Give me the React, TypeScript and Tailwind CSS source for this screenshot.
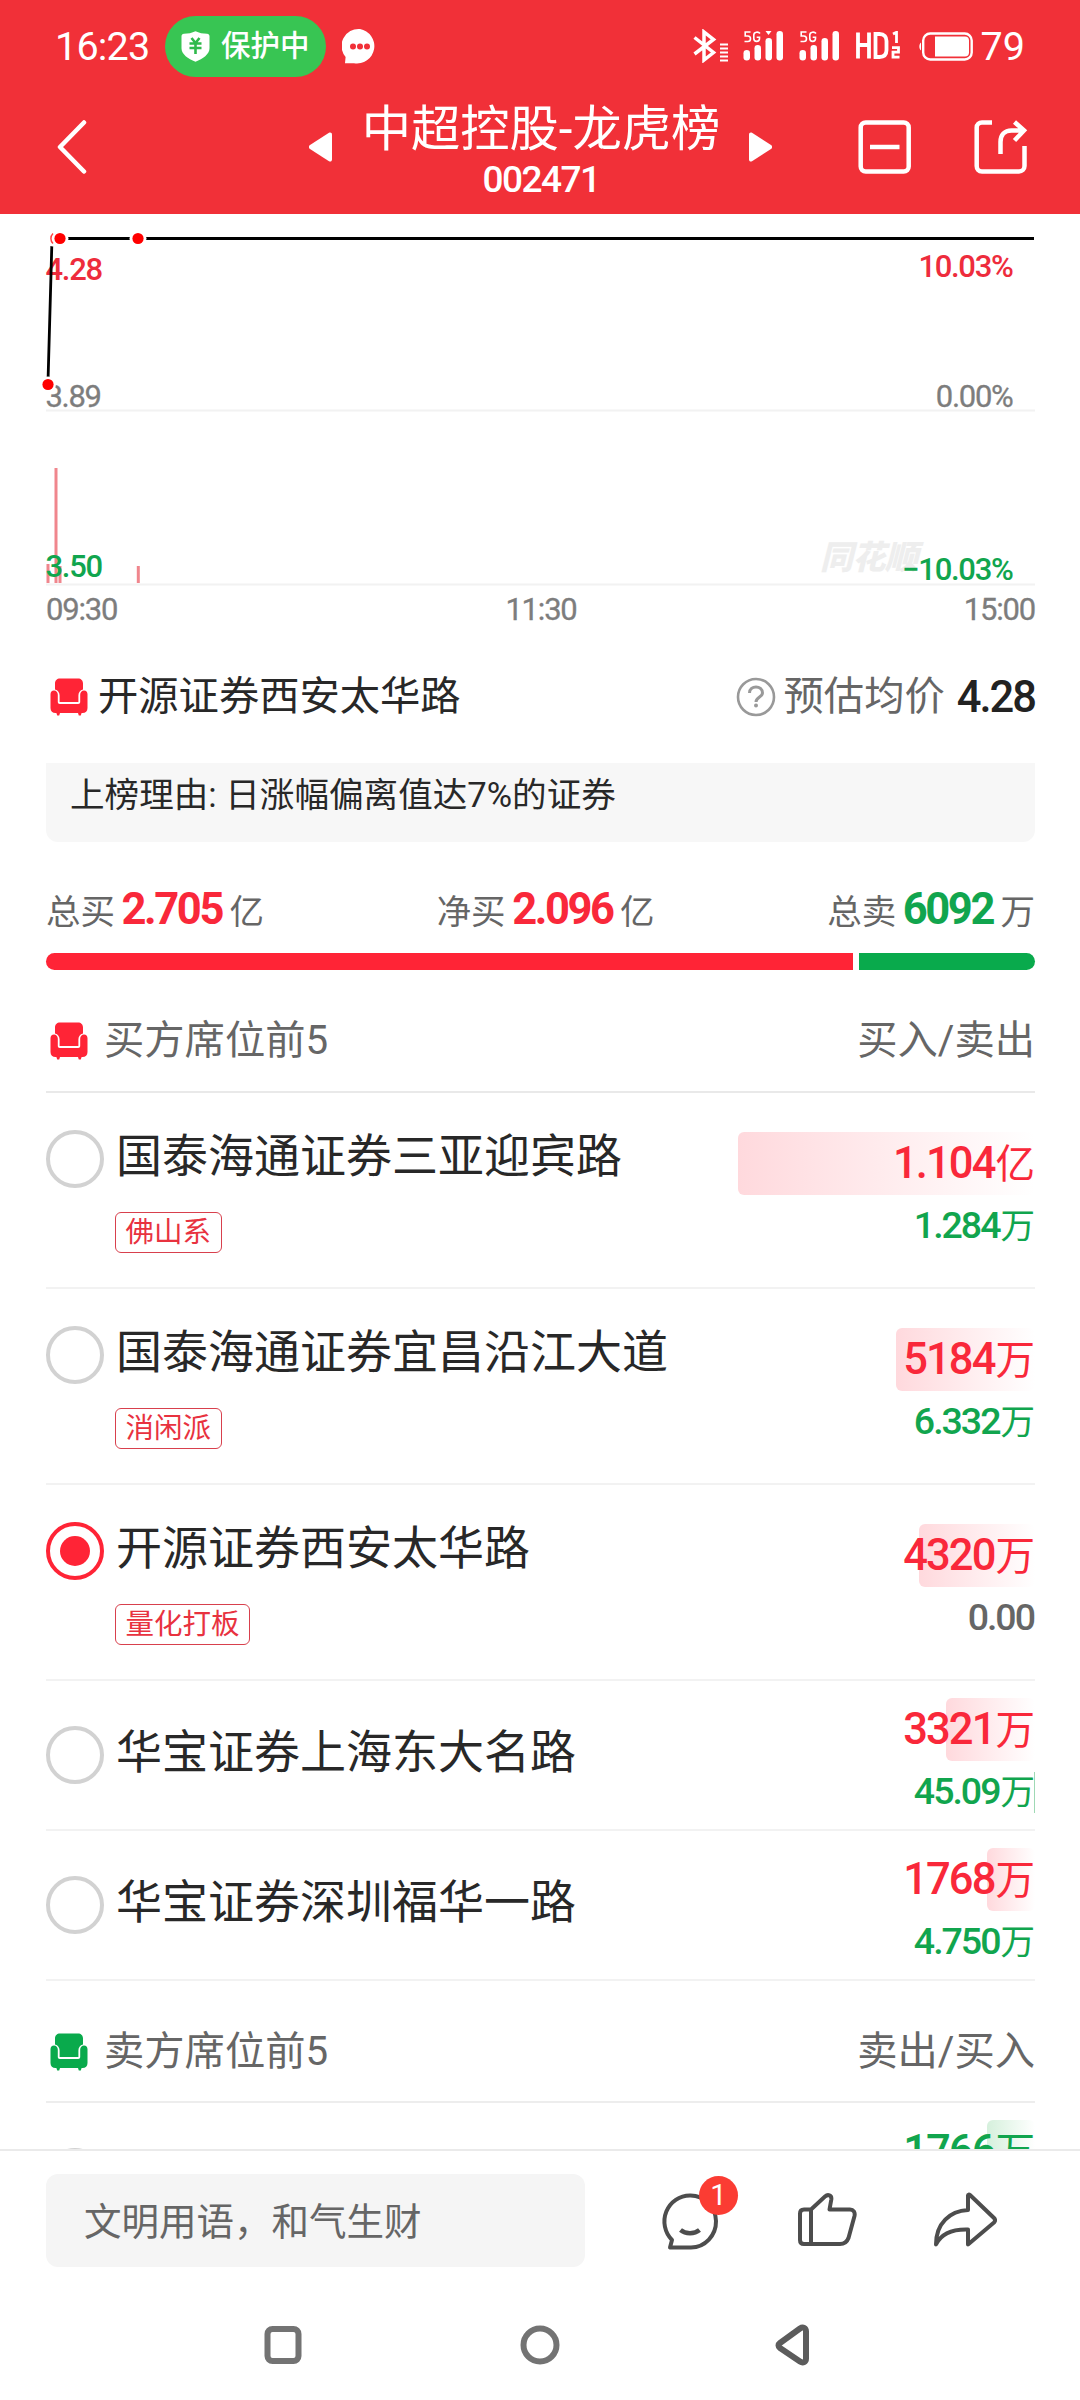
import React from "react";

type Seat = {
  name: string;
  tag?: string;
  selected?: boolean;
  main: string;
  unit: string;
  sub: string;
  subUnit: string;
  barWidth: number;
  tick?: boolean;
};

const buyers: Seat[] = [
  { name: "国泰海通证券三亚迎宾路", tag: "佛山系", main: "1.104", unit: "亿", sub: "1.284", subUnit: "万", barWidth: 297 },
  { name: "国泰海通证券宜昌沿江大道", tag: "消闲派", main: "5184", unit: "万", sub: "6.332", subUnit: "万", barWidth: 139 },
  { name: "开源证券西安太华路", tag: "量化打板", selected: true, main: "4320", unit: "万", sub: "0.00", subUnit: "", barWidth: 116 },
  { name: "华宝证券上海东大名路", main: "3321", unit: "万", sub: "45.09", subUnit: "万", barWidth: 89, tick: true },
  { name: "华宝证券深圳福华一路", main: "1768", unit: "万", sub: "4.750", subUnit: "万", barWidth: 48 },
];

function Sofa({ className }: { className: string }) {
  return (
    <svg width="38" height="38" viewBox="0 0 38 38" className={className} fill="currentColor">
      <path d="M10 0.5h18c3 0 5 2 5 5v6c-3 .7-4.600 3-4.600 6v6.500H9.600v-6.500c0-3-1.600-5.300-4.600-6v-6c0-3 2-5 5-5z" />
      <path d="M4 12.500c2.200 0 3.800 1.700 3.800 4v7.500c0 1.300.8 2 2 2h18.400c1.200 0 2-.7 2-2v-7.500c0-2.300 1.600-4 3.800-4s3.500 1.600 3.500 3.700V30c0 3.200-2 5-5 5h-.9l-.8 2.500h-2L28 35H10l-.8 2.500h-2L6.400 35h-.9c-3 0-5-1.800-5-5V16.200c0-2.100 1.300-3.700 3.500-3.700z" />
    </svg>
  );
}

function Signal({ mark }: { mark?: boolean }) {
  return (
    <svg width="41" height="30" viewBox="0 0 41 30" fill="#fff">
      <rect x="0.500" y="19" width="6.500" height="10.500" rx="3.200" />
      <rect x="11.500" y="14" width="6.500" height="15.500" rx="3.200" />
      <rect x="22.500" y="7" width="6.500" height="22.500" rx="3.200" />
      <rect x="33.500" y="0" width="6.500" height="29.500" rx="3.200" />
      {mark && <path d="M22.500 0h6l-3 4z" />}
      <path d="M7.500 1H2.200v4h2.600c3.600 0 3.600 5.500 0 5.500H1.500M17 2.500C15.500 0.500 10.800 0.500 10.800 4v3.500c0 3.800 5.700 3.800 5.700 0V6.300h-2.800" fill="none" stroke="#fff" strokeWidth="1.600" />
    </svg>
  );
}

function StatusBar() {
  return (
    <div className="flex h-[92px] items-center pl-[55px] pr-[55px] text-white">
      <span className="w-[110px] pt-[2px] text-[39.5px] leading-[40px] tracking-[-0.8px]">16:23</span>
      <div className="flex h-[61px] w-[161px] items-center rounded-full bg-[#38c553] pl-[16px]">
        <svg width="29" height="31" viewBox="0 0 29 31">
          <path d="M14.500 0.300C18 2 22 2.800 26 2.800c1.500 0 2.500 1 2.500 2.500v12c0 6-6.500 10.500-14 13.500C7 27.800.5 23.300.5 17.300v-12c0-1.500 1-2.500 2.500-2.500 4 0 8-.8 11.500-2.500z" fill="#fff" />
          <path d="M10.500 7l4 5 4-5M8.500 12.500h12M8.500 17h12M14.500 12v11" stroke="#2fb94b" strokeWidth="2.600" fill="none" />
        </svg>
        <span className="ml-[11px] text-[29.5px] font-medium leading-[40px]">保护中</span>
      </div>
      <svg width="36" height="37" viewBox="0 0 36 37" className="ml-[16px] mt-[1px]">
        <path d="M18 1a17 17 0 1 1-6 34.200H3l.6-6.200A17 17 0 0 1 18 1z" fill="#fff" />
        <g fill="#f13038"><circle cx="11" cy="18.500" r="3" /><circle cx="18" cy="18.500" r="3" /><circle cx="25" cy="18.500" r="3" /></g>
      </svg>
      <div className="ml-auto flex h-[32px] items-center">
        <svg width="35" height="34" viewBox="0 0 35 34" fill="none" stroke="#fff" strokeWidth="3.500">
          <path d="M1.500 8.500L20.500 23.500 11 31V3l9.500 7.500L1.500 25" />
          <path d="M27 15.500h8M27 19.500h8M27 23.500h8M27 27.500h8M27 31.500h8" strokeWidth="1.800" />
        </svg>
        <span className="ml-[15px]"><Signal mark /></span>
        <span className="ml-[15px]"><Signal /></span>
        <svg width="45" height="30" viewBox="0 0 45 30" fill="none" stroke="#fff" className="ml-[16px]">
          <path d="M2 1.500v26M13 1.500v26M2 14h11M19.500 3v23h4c5 0 7-3 7-7v-9c0-4-2-7-7-7z" strokeWidth="3.800" />
          <path d="M37 3l3.500-1.700V12M36 16.700h6.500v4.500h-5.500v5h6.500" strokeWidth="2.800" />
        </svg>
        <svg width="56" height="29" viewBox="0 0 56 29" className="ml-[17px]">
          <path d="M3 10.500C.8 12 .8 17 3 18.500z" fill="#fff" />
          <rect x="5.200" y="1.500" width="48.500" height="26" rx="7" fill="none" stroke="#fff" strokeWidth="2.400" />
          <path d="M17 4.500h30c2.500 0 4 1.500 4 4v12c0 2.500-1.500 4-4 4H17z" fill="#fff" />
        </svg>
        <span className="ml-[7px] pt-[1px] text-[39.5px] leading-[40px]">79</span>
      </div>
    </div>
  );
}

function TitleBar() {
  return (
    <div className="flex h-[122px] items-start text-white">
      <svg width="31" height="54" viewBox="0 0 31 54" className="ml-[57px] mt-[28px]" fill="none" stroke="#fff" strokeWidth="4.500" strokeLinecap="round" strokeLinejoin="round">
        <path d="M27 2.500L3 27l24 24.500" />
      </svg>
      <svg width="24" height="30" viewBox="0 0 24 30" className="ml-[221px] mt-[40px]" fill="#fff">
        <path d="M1 13L20 .8c1.500-.9 3 0 3 1.700v25c0 1.700-1.500 2.600-3 1.700L1 17c-1.500-1-1.500-3 0-4z" />
      </svg>
      <div className="flex w-[416px] flex-col items-center">
        <div className="mt-[7px] text-[49.3px] leading-[60px]">中超控股-龙虎榜</div>
        <div className="mt-px text-[37px] font-medium leading-[40px] tracking-[-1.500px]">002471</div>
      </div>
      <svg width="24" height="30" viewBox="0 0 24 30" className="-ml-[1px] mt-[40px]" fill="#fff">
        <path d="M23 13L4 .8C2.500-.1 1 .8 1 2.500v25c0 1.700 1.500 2.600 3 1.700L23 17c1.500-1 1.500-3 0-4z" />
      </svg>
      <svg width="54" height="54" viewBox="0 0 54 54" className="ml-[86px] mt-[28px]" fill="none" stroke="#fff" strokeWidth="4.500">
        <rect x="2.700" y="2.500" width="48" height="49" rx="5" /><path d="M12 27h29.500" />
      </svg>
      <svg width="54" height="54" viewBox="0 0 54 54" className="ml-[62px] mt-[28px]" fill="none" stroke="#fff" strokeWidth="4.500">
        <path d="M18 2.500H8c-3 0-5.300 2-5.300 5V46c0 3.300 2 5.500 5.300 5.500h37c3 0 5.500-2.200 5.500-5.500V26" />
        <path d="M26.500 34V22c0-7 4-11.500 11-11.500h12M40.500 2L50 10.500 40.500 20.500" />
      </svg>
    </div>
  );
}

function Chart() {
  return (
    <svg width="1080" height="426" viewBox="0 214 1080 426" className="block" fontSize="31" letterSpacing="-1.3" fontFamily="Roboto, sans-serif">
      <path d="M46 410.500H1035M46 584.500H1035" stroke="#f2f2f2" strokeWidth="2" />
      <text x="820" y="569" fontSize="33" fontWeight="900" fill="#eeeeee" letterSpacing="-0.500" fontStyle="italic" style={{ fontFamily: "'Noto Sans CJK SC', sans-serif" }}>同花顺</text>
      <g fill="#f0868d">
        <rect x="54.500" y="468" width="3" height="115" />
        <rect x="46.500" y="564" width="3" height="19" />
        <rect x="58.500" y="566" width="3" height="17" />
        <rect x="136.800" y="566" width="3" height="17" />
      </g>
      <g fontWeight="500">
        <text x="45.500" y="280" fill="#ee2c3c">4.28</text>
        <text x="1012.500" y="277" fill="#ee2c3c" textAnchor="end">10.03%</text>
        <text x="45.500" y="577" fill="#11a54e">3.50</text>
        <text x="1012.500" y="580" fill="#11a54e" textAnchor="end">−10.03%</text>
      </g>
      <g fill="#7d7d7d" stroke="#7d7d7d" strokeWidth="0.300">
        <text x="45.500" y="407">3.89</text>
        <text x="1012.500" y="407" textAnchor="end">0.00%</text>
        <text x="46" y="620" letterSpacing="-1.2">09:30</text>
        <text x="541" y="620" textAnchor="middle" letterSpacing="-1.2">11:30</text>
        <text x="1035" y="620" textAnchor="end" letterSpacing="-1.2">15:00</text>
      </g>
      <path d="M48 382L52 238.500H1034" fill="none" stroke="#000" strokeWidth="2.800" />
      <g fill="#fff"><circle cx="53" cy="238.500" r="8" /><circle cx="60" cy="238.500" r="8.500" /><circle cx="138" cy="238.500" r="8.500" /><circle cx="48" cy="384.500" r="8" /></g>
      <path d="M53 233.500a7 7 0 0 0 0 10" fill="none" stroke="#f44" strokeWidth="1.500" />
      <g fill="#f00"><circle cx="60" cy="238.500" r="5.600" /><circle cx="138" cy="238.500" r="5.600" /><circle cx="48" cy="384.500" r="5.600" /></g>
    </svg>
  );
}

function Total({ label, value, unit, color }: { label: string; value: string; unit: string; color: string }) {
  return (
    <div className="flex items-baseline text-[34.5px] leading-[50px] text-[#666]">
      <span>{label}</span>
      <span className={"ml-[6.5px] mr-[7.5px] text-[43.5px] font-bold tracking-[-2.400px] " + color}>{value}</span>
      <span>{unit}</span>
    </div>
  );
}

function SectionHeader({ title, right, color, className }: { title: string; right: string; color: string; className: string }) {
  return (
    <div className={"flex justify-between text-[40.300px] leading-[50px] text-[#666] " + className}>
      <div className="flex">
        <Sofa className={"ml-[4px] mt-[6px] " + color} />
        <span className="ml-[16px]">{title}</span>
      </div>
      <span>{right}</span>
    </div>
  );
}

function Radio({ selected }: { selected?: boolean }) {
  return selected ? (
    <span className="flex size-[58px] shrink-0 items-center justify-center rounded-full border-4 border-[#ff2436]">
      <span className="size-[30px] rounded-full bg-[#ff2436]" />
    </span>
  ) : (
    <span className="size-[58px] shrink-0 rounded-full border-4 border-[#d2d2d2]" />
  );
}

function SeatRow({ seat, sell }: { seat: Seat; sell?: boolean }) {
  const tall = Boolean(seat.tag);
  return (
    <div className={"flex justify-between border-b-2 border-[#f2f2f2] " + (tall ? "h-[196px] pt-[37px]" : "h-[150px] pt-[15px]")}>
      <div className={tall ? "" : "pt-[30px]"}>
        <div className="flex text-[46px] leading-[58px] text-[#282828]">
          <Radio selected={seat.selected} />
          <span className="-mt-[3px] ml-[12px]">{seat.name}</span>
        </div>
        {seat.tag && (
          <span className="ml-[69px] mt-[24px] block h-[41px] w-fit rounded-[6px] border border-[#d8404d] px-[9.5px] text-[28.5px] leading-[40px] text-[#e8323f]">{seat.tag}</span>
        )}
      </div>
      <div className="relative flex w-[300px] flex-col items-end pt-[2px]">
        <span
          className={"absolute right-0 top-[2px] h-[63px] rounded-[6px] bg-linear-to-r to-white " + (sell ? "from-[#d5f0dc]" : "from-[#ffd9dd]")}
          style={{ width: seat.barWidth }}
        />
        {seat.tick && <span className="absolute right-0 top-[76px] h-[41px] w-px bg-[#9fd9b5]" />}
        <div className={"relative flex h-[63px] items-baseline text-[39.5px] leading-[63px] " + (sell ? "text-[#11a54e]" : "text-[#f9283a]")}>
          <span className="text-[43.5px] font-medium tracking-[-1.900px]">{seat.main}</span>
          <span className="ml-[1px]">{seat.unit}</span>
        </div>
        <div className={"flex h-[60px] items-baseline text-[34.500px] leading-[60px] " + (seat.subUnit ? "text-[#11a54e]" : "text-[#666]")}>
          <span className="text-[37.5px] font-medium tracking-[-2px]">{seat.sub}</span>
          <span className="ml-[1px]">{seat.subUnit}</span>
        </div>
      </div>
    </div>
  );
}

function BottomBar() {
  return (
    <div className="h-[251px] border-t-2 border-[#eaeaea] bg-white">
      <div className="flex px-[46px] pt-[23px]">
        <div className="h-[93px] w-[539px] rounded-[12px] bg-[#f5f5f5] pl-[38px] text-[37.5px] leading-[96px] text-[#666]">文明用语，和气生财</div>
        <div className="relative ml-[76px] mt-[17px] h-[60px] w-[60px]">
          <svg width="60" height="60" viewBox="0 0 60 60" fill="none" stroke="#4d4d4d" strokeWidth="4" strokeLinejoin="round">
            <path d="M29 4.500a25.500 26 0 0 0-18 44.500l-2 7.500h21A25.500 26 0 0 0 29 4.500z" />
            <path d="M19.500 39c5 4.200 14 4.200 19 0" strokeWidth="4.500" />
          </svg>
          <span className="absolute -top-[15px] left-[38px] flex size-[39px] items-center justify-center rounded-full bg-[#fb3c33] text-[29px] leading-[39px] text-white">1</span>
        </div>
        <svg width="60" height="56" viewBox="0 0 60 56" className="ml-[76px] mt-[18px]" fill="none" stroke="#4d4d4d" strokeWidth="4" strokeLinejoin="round">
          <path d="M14 17.500V52M14 17.500H7c-2.500 0-4 1.500-4 4V48c0 2.500 1.500 4 4 4h36c4.500 0 7-2 8.500-6l6-22c.8-3.500-1-6.500-4.500-6.500H32.500l1.800-10c.6-4.500-3.500-5.500-6.300-3z" />
        </svg>
        <svg width="64" height="56" viewBox="0 0 64 56" className="ml-[76px] mt-[18px]" fill="none" stroke="#4d4d4d" strokeWidth="4" strokeLinejoin="round">
          <path d="M35 3.500V18C17 19 3 31 3 52.500 8 42 18 37 35 37.500V52.500L61 30.500c1.500-1.500 1.500-3 0-4.500L37 3c-1-.8-2-.5-2 .5z" />
        </svg>
      </div>
      <div className="mt-[56px] flex items-center pl-[263px]">
        <svg width="40" height="44" viewBox="0 0 40 44" fill="none" stroke="#737373" strokeWidth="6"><rect x="4.500" y="6" width="31" height="32" rx="5" /></svg>
        <svg width="44" height="44" viewBox="0 0 44 44" fill="none" stroke="#737373" strokeWidth="6" className="ml-[215px]"><circle cx="22" cy="22" r="16.500" /></svg>
        <svg width="40" height="44" viewBox="0 0 40 44" fill="none" stroke="#5c5c5c" strokeWidth="6" strokeLinejoin="round" className="ml-[213px]"><path d="M5 20L25 5.500c3-2 6-.5 6 3v27c0 3.500-3 5-6 3L5 25c-2-1.500-2-3.500 0-5z" /></svg>
      </div>
    </div>
  );
}

export default function App() {
  return (
    <div className="flex h-[2400px] w-[1080px] flex-col overflow-hidden bg-white" style={{ fontFamily: "Roboto, 'Noto Sans CJK SC', sans-serif" }}>
      <header className="h-[214px] shrink-0 bg-[#f13038]">
        <StatusBar />
        <TitleBar />
      </header>
      <main className="h-[1935px] shrink-0 overflow-hidden">
        <Chart />
        <div className="pl-[46px] pr-[45px]">
          <div className="flex h-[123px] justify-between pt-[32px] text-[40.300px] leading-[50px]">
            <div className="flex text-[#282828]">
              <Sofa className="ml-[4px] mt-[6px] text-[#ff2436]" />
              <span className="ml-[10px]">开源证券西安太华路</span>
            </div>
            <div className="flex text-[#666]">
              <svg width="40" height="40" viewBox="0 0 40 40" className="mr-[8px] mt-[5px]" fill="none" stroke="#999" strokeWidth="2.600">
                <circle cx="20" cy="20" r="18" />
                <path d="M13.500 16c0-8 13-8 13 0 0 4-6.500 4-6.500 9" strokeWidth="3" />
                <circle cx="20" cy="28.500" r="2" fill="#999" stroke="none" />
              </svg>
              <span>预估均价</span>
              <span className="ml-[12px] mt-[1px] text-[43.5px] font-medium tracking-[-2px] text-[#222]">4.28</span>
            </div>
          </div>
          <div className="h-[79px] rounded-b-[12px] bg-[#f7f7f7] pl-[24px] pt-[7px] text-[34.600px] leading-[50px] text-[#282828]">上榜理由: 日涨幅偏离值达7%的证券</div>
          <div className="flex justify-between pt-[43px]">
            <Total label="总买" value="2.705" unit="亿" color="text-[#f9283a]" />
            <Total label="净买" value="2.096" unit="亿" color="text-[#f9283a]" />
            <Total label="总卖" value="6092" unit="万" color="text-[#11a54e]" />
          </div>
          <div className="mt-[16px] flex h-[17px] gap-[6px]">
            <span className="w-[807px] rounded-l-full bg-[#ff2436]" />
            <span className="flex-1 rounded-r-full bg-[#09aa4c]" />
          </div>
          <SectionHeader title="买方席位前5" right="买入/卖出" color="text-[#ff2436]" className="h-[123px] border-b-2 border-[#e9e9e9] pt-[46px]" />
          {buyers.map((s) => <SeatRow key={s.name} seat={s} />)}
          <SectionHeader title="卖方席位前5" right="卖出/买入" color="text-[#09aa4c]" className="h-[122px] border-b-2 border-[#ededed] pt-[46px]" />
          <SeatRow sell seat={{ name: "", main: "1766", unit: "万", sub: "", subUnit: "", barWidth: 48 }} />
        </div>
      </main>
      <BottomBar />
    </div>
  );
}
